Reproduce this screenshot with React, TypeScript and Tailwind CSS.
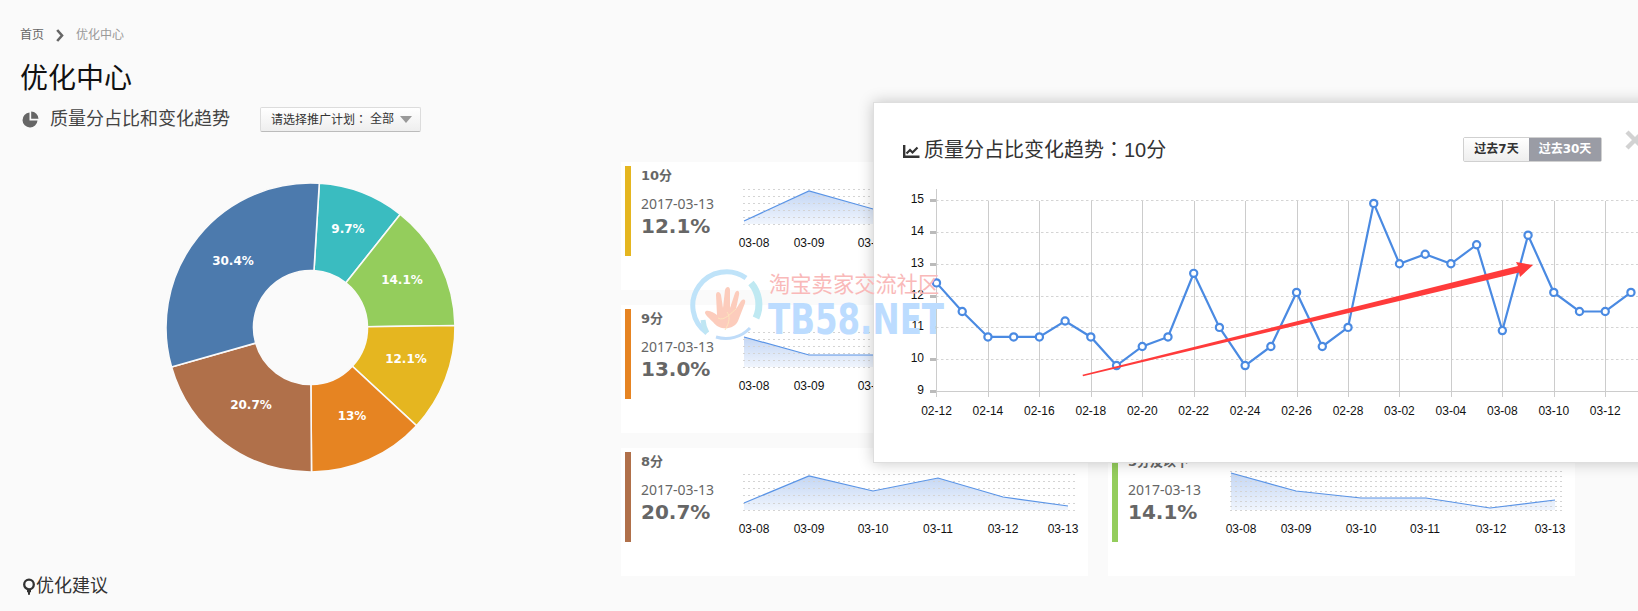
import React from "react";

const F = { fontFamily: '"DejaVu Sans","Noto Sans CJK SC",sans-serif' };
const CJK = { fontFamily: '"Liberation Sans","Noto Sans CJK SC",sans-serif' };
const TC = { fontFamily: '"Noto Sans CJK TC",sans-serif' };
const LABEL = '"Liberation Sans",sans-serif';

type Spark = {
  title: string; color: string; pct: string; origin: number;
  xs: number[]; ys: number[]; lx: number[]; x1: number; x2: number; lines: number[];
};

const L1 = [26, 33, 40, 47, 55, 62];
const L2 = [23, 28, 33, 38, 43, 48, 53, 58, 62];
const X1 = [744, 809, 873, 938, 1003, 1068];
const LX1 = [754, 809, 873, 938, 1003, 1063];
const X2 = [1231, 1296, 1361, 1426, 1490, 1555];
const LX2 = [1241, 1296, 1361, 1425, 1491, 1550];
const cards: Spark[] = [
  { title: "10分", color: "#e5b620", pct: "12.1%", origin: 737, xs: X1, ys: [59, 29, 47, 38, 50, 56], lx: LX1, x1: 743, x2: 1076, lines: [27, 34, 41, 48, 55, 62] },
  { title: "7分", color: "#4c7aad", pct: "30.4%", origin: 1224, xs: X2, ys: [40, 50, 44, 46, 52, 56], lx: LX2, x1: 1230, x2: 1562, lines: L2 },
  { title: "9分", color: "#e68422", pct: "13.0%", origin: 737, xs: X1, ys: [32, 50, 50, 44, 52, 56], lx: LX1, x1: 743, x2: 1076, lines: [27, 34, 41, 48, 55, 62] },
  { title: "6分", color: "#3abcc0", pct: "9.7%", origin: 1224, xs: X2, ys: [44, 40, 48, 42, 52, 56], lx: LX2, x1: 1230, x2: 1562, lines: L2 },
  { title: "8分", color: "#b0704a", pct: "20.7%", origin: 737, xs: X1, ys: [55, 28, 43, 30, 49, 58], lx: LX1, x1: 743, x2: 1076, lines: L1 },
  { title: "5分及以下", color: "#94cd5c", pct: "14.1%", origin: 1224, xs: X2, ys: [25, 43, 50, 50, 60, 52], lx: LX2, x1: 1230, x2: 1562, lines: L2 },
];
const days = ["03-08", "03-09", "03-10", "03-11", "03-12", "03-13"];

function SparkChart({ c, id }: { c: Spark; id: string }) {
  const pts = c.xs.map((x, i) => `${x - c.origin},${c.ys[i]}`);
  return (
    <svg width="345" height="100" viewBox="0 0 345 100" className="block shrink-0">
      <defs>
        <linearGradient id={id} x1="0" y1="0" x2="0" y2="1">
          <stop offset="0" stopColor="#c3d6f4" />
          <stop offset="1" stopColor="#f0f5fd" />
        </linearGradient>
      </defs>
      <polygon points={`${c.xs[0] - c.origin},62 ${pts.join(" ")} ${c.xs[5] - c.origin},62`} fill={`url(#${id})`} />
      {c.lines.map((y) => (
        <line key={y} x1={c.x1 - c.origin} x2={c.x2 - c.origin} y1={y + 0.5} y2={y + 0.5} stroke="#d4d4d4" strokeDasharray="2 3" />
      ))}
      <polyline points={pts.join(" ")} fill="none" stroke="#5a94e6" strokeWidth="1.2" />
      {days.map((d, i) => (
        <text key={d} x={c.lx[i] - c.origin} y="85" textAnchor="middle" fontSize="12" fill="#111" fontFamily={LABEL}>{d}</text>
      ))}
    </svg>
  );
}

function Card({ c, id }: { c: Spark; id: string }) {
  return (
    <div className="flex h-[128px] bg-white">
      <div className="ml-1 mt-1 h-[90px] w-[6px] shrink-0" style={{ backgroundColor: c.color }} />
      <div className="ml-[10px] w-[96px] shrink-0 text-[#666]">
        <div className="mt-[5px] h-[18px] whitespace-nowrap text-[13px] font-bold leading-[18px]" style={F}>{c.title}</div>
        <div className="mt-[10px] h-[18px] whitespace-nowrap text-[14px] leading-[18px]" style={{ fontFamily: '"Noto Sans",sans-serif' }}>2017-03-13</div>
        <div className="h-[26px] text-[20px] font-bold leading-[26px]" style={F}>{c.pct}</div>
      </div>
      <SparkChart c={c} id={id} />
    </div>
  );
}

const donut: { from: number; to: number; color: string }[] = [
  { from: 3.5, to: 38.4, color: "#3abcc0" },
  { from: 38.4, to: 89.2, color: "#94cd5c" },
  { from: 89.2, to: 132.8, color: "#e5b620" },
  { from: 132.8, to: 179.6, color: "#e68422" },
  { from: 179.6, to: 254.1, color: "#b0704a" },
  { from: 254.1, to: 363.5, color: "#4c7aad" },
];
const donutLabels: [string, number, number][] = [
  ["30.4%", 233, 265], ["9.7%", 348, 233], ["14.1%", 402, 284], ["12.1%", 406, 363], ["13%", 352, 420], ["20.7%", 251, 409],
];
function arc(from: number, to: number) {
  const cx = 310.5, cy = 327.5, R = 144.5, r = 57;
  const p = (a: number, rad: number) => {
    const t = (a * Math.PI) / 180;
    return `${(cx + rad * Math.sin(t)).toFixed(2)} ${(cy - rad * Math.cos(t)).toFixed(2)}`;
  };
  const large = to - from > 180 ? 1 : 0;
  return `M${p(from, R)} A${R} ${R} 0 ${large} 1 ${p(to, R)} L${p(to, r)} A${r} ${r} 0 ${large} 0 ${p(from, r)} Z`;
}

function Donut() {
  return (
    <svg width="293" height="293" viewBox="164 181 293 293" className="ml-[144px] mt-[19px] block">
      {donut.map((s) => (
        <path key={s.color} d={arc(s.from, s.to)} fill={s.color} stroke="#fafafa" strokeWidth="1.6" />
      ))}
      {donutLabels.map(([t, x, y]) => (
        <text key={t} x={x} y={y} textAnchor="middle" fontSize="12" fontWeight="700" fill="#fff" fontFamily='"DejaVu Sans",sans-serif'>{t}</text>
      ))}
    </svg>
  );
}

const vals = [12.4, 11.5, 10.7, 10.7, 10.7, 11.2, 10.7, 9.8, 10.4, 10.7, 12.7, 11, 9.8, 10.4, 12.1, 10.4, 11, 14.9, 13, 13.3, 13, 13.6, 10.9, 13.9, 12.1, 11.5, 11.5, 12.1];
const xLabels = ["02-12", "02-14", "02-16", "02-18", "02-20", "02-22", "02-24", "02-26", "02-28", "03-02", "03-04", "03-08", "03-10", "03-12"];
const xAt = (i: number) => 935.5 + i * 25.72;
const yAt = (v: number) => 391 - (v - 9) * 31.8;

function BigChart() {
  const pts = vals.map((v, i) => `${xAt(i)},${yAt(v)}`).join(" ");
  return (
    <svg width="765" height="260" viewBox="873 170 765 260" className="block">
      {[10, 11, 12, 13, 14, 15].map((v) => (
        <line key={v} x1="935" x2="1637" y1={Math.round(yAt(v)) + 0.5} y2={Math.round(yAt(v)) + 0.5} stroke="#d4d4d4" strokeDasharray="2.5 2.5" />
      ))}
      <line x1="935.5" x2="935.5" y1="189" y2="397" stroke="#cccccc" />
      {xLabels.map((_, i) => i > 0 && (
        <line key={i} x1={Math.round(xAt(i * 2)) + 0.5} x2={Math.round(xAt(i * 2)) + 0.5} y1="201" y2="397" stroke="#cccccc" />
      ))}
      <line x1="935" x2="1637" y1="391.5" y2="391.5" stroke="#cccccc" />
      {[9, 10, 11, 12, 13, 14, 15].map((v) => (
        <g key={v}>
          <rect x="929" y={Math.round(yAt(v)) - 1} width="6" height="3" fill="#bbbbbb" />
          <text x="923" y={yAt(v) + 3} textAnchor="end" fontSize="12" fill="#111" fontFamily={LABEL}>{v}</text>
        </g>
      ))}
      {xLabels.map((l, i) => (
        <text key={l} x={xAt(i * 2)} y="415" textAnchor="middle" fontSize="12" fill="#111" fontFamily={LABEL}>{l}</text>
      ))}
      <polyline points={pts} fill="none" stroke="#4a8ae2" strokeWidth="2.2" />
      {vals.map((v, i) => (
        <circle key={i} cx={xAt(i)} cy={yAt(v)} r="3.6" fill="#fff" stroke="#4a8ae2" strokeWidth="2.2" />
      ))}
      <polygon points="1081.5,374.8 1517,266 1515,262 1532,265 1519,277 1518,272.5 1082,376.2" fill="#ff3b3b" />
    </svg>
  );
}

function Modal() {
  return (
    <div className="absolute left-[873px] top-[102px] h-[361px] w-[800px] border border-[#dedede] bg-white shadow-[0_0_14px_rgba(0,0,0,0.22)]">
      <div className="flex h-[67px] items-start pl-[29px] pt-[32px]">
        <svg width="17" height="13" viewBox="0 0 17 13" className="mr-[4px] mt-[10px] shrink-0" fill="none" stroke="#333">
          <path d="M1.2 0V11.7H16.5" strokeWidth="2.4" />
          <path d="M3.5 8.5L7 5L9.5 7.5L14.5 2.5" strokeWidth="2.2" />
        </svg>
        <div className="h-[28px] whitespace-nowrap text-[20px] leading-[28px] text-[#333]" style={CJK}>
          质量分占比变化趋势<span style={TC}>：</span>10分
        </div>
      </div>
      <div className="absolute left-[589px] top-[34px] flex h-[25px] rounded-[2px] border border-[#d0d0d0] text-[12px] font-bold leading-[23px]" style={F}>
        <div className="w-[65px] bg-gradient-to-b from-white to-[#eeeeee] text-center text-[#333]">过去7天</div>
        <div className="w-[72px] bg-[#9a9ca5] text-center text-white">过去30天</div>
      </div>
      <svg width="20" height="20" viewBox="0 0 20 20" className="absolute left-[751px] top-[27px]" stroke="#d2d2d2" strokeWidth="4.4">
        <path d="M2 2L18 18M18 2L2 18" />
      </svg>
      <BigChart />
    </div>
  );
}

function Watermark() {
  return (
    <svg width="290" height="80" viewBox="690 265 290 80" className="pointer-events-none absolute left-[690px] top-[265px]">
      <g fill="none" strokeLinecap="butt">
        <path d="M707 333 A33 33 0 0 1 746 278" stroke="#bfe3f9" strokeWidth="5" />
        <path d="M707 333 A33 33 0 0 1 703 320" stroke="#bfe6f3" strokeWidth="5" />
        <path d="M751 283 A33 33 0 0 1 756 318" stroke="#bfe9f2" strokeWidth="7" />
        <path d="M750 328 A33 33 0 0 1 716 337" stroke="#bfdcf9" strokeWidth="3" />
      </g>
      <path d="M713 322 C707 316 703 313 706 311 C710 310 714 313 717 315 L716 295 C716 291 720 291 721 295 L723 308 L725 290 C726 286 730 286 730 290 L730 308 L735 293 C737 289 740 291 739 295 L736 309 L741 301 C744 298 746 300 745 303 L738 321 C735 329 720 332 713 322 Z" fill="#fcccbc" />
      <path d="M718 318 C724 322 732 312 736 309 M725 330 C730 322 730 316 727 312" fill="none" stroke="#fce4bc" strokeWidth="1" />
      <text x="769" y="292" fontSize="21.3" fill="#f9b9b9" fontFamily='"Noto Sans CJK SC",sans-serif'>淘宝卖家交流社区</text>
      <text x="768" y="334" fontSize="43" fontWeight="700" fill="#bcdcff" fontFamily='"DejaVu Sans",sans-serif' textLength="176" lengthAdjust="spacingAndGlyphs">TB58.NET</text>
    </svg>
  );
}

export default function App() {
  return (
    <div className="relative h-[611px] w-[1638px] overflow-hidden bg-[#fafafa]" style={CJK}>
      <div className="px-5 pt-[27px]">
        <div className="flex h-4 items-center text-[12px] leading-4">
          <span className="text-[#666]">首页</span>
          <svg width="8" height="13" viewBox="0 0 8 13" className="ml-[12px] mr-[12px]" fill="none" stroke="#666" strokeWidth="2.6">
            <path d="M1.2 1L6 6.5L1.2 12" />
          </svg>
          <span className="text-[#999]">优化中心</span>
        </div>
        <h1 className="mt-[16px] h-10 text-[28px] font-normal leading-10 text-[#111]">优化中心</h1>
        <div className="mt-[7px] flex h-[26px] items-center">
          <svg width="17" height="17" viewBox="0 0 17 17" className="ml-[2px]">
            <path d="M7.5 1.5A7.5 7.5 0 1 0 15.5 9.5H7.5Z" fill="#666" />
            <path d="M9.2 0.5A7.5 7.5 0 0 1 16.5 7.8H9.2Z" fill="#666" />
          </svg>
          <span className="ml-[11px] text-[18px] leading-[26px] text-[#444]">质量分占比和变化趋势</span>
          <button className="ml-[30px] flex h-[25px] w-[161px] items-center rounded-[2px] border border-[#dcdcdc] border-b-[#bbbbbb] bg-gradient-to-b from-white to-[#eeeeee] pl-[10px] text-[12px] text-[#333]">
            <span>请选择推广计划<span style={TC}>：</span></span>
            <span className="ml-[3px]">全部</span>
            <svg width="12" height="7" viewBox="0 0 12 7" className="ml-[6px]">
              <path d="M0 0H12L6 7Z" fill="#999" />
            </svg>
          </button>
        </div>
        <div className="mt-[30px] flex">
          <div className="w-[601px] shrink-0"><Donut /></div>
          <div className="grid grid-cols-[467px_467px] gap-x-5 gap-y-[15px]">
            {cards.map((c, i) => <Card key={c.title} c={c} id={`sg${i}`} />)}
          </div>
        </div>
        <div className="flex h-5 items-center">
          <svg width="14" height="17" viewBox="0 0 14 17" className="ml-[2px]" fill="none" stroke="#333" strokeWidth="2.3">
            <circle cx="7" cy="6.5" r="4.8" />
            <path d="M5 13H9M6 15.5H8" />
          </svg>
          <span className="text-[18px] leading-5 text-[#333]">优化建议</span>
        </div>
      </div>
      <Modal />
      <Watermark />
    </div>
  );
}
